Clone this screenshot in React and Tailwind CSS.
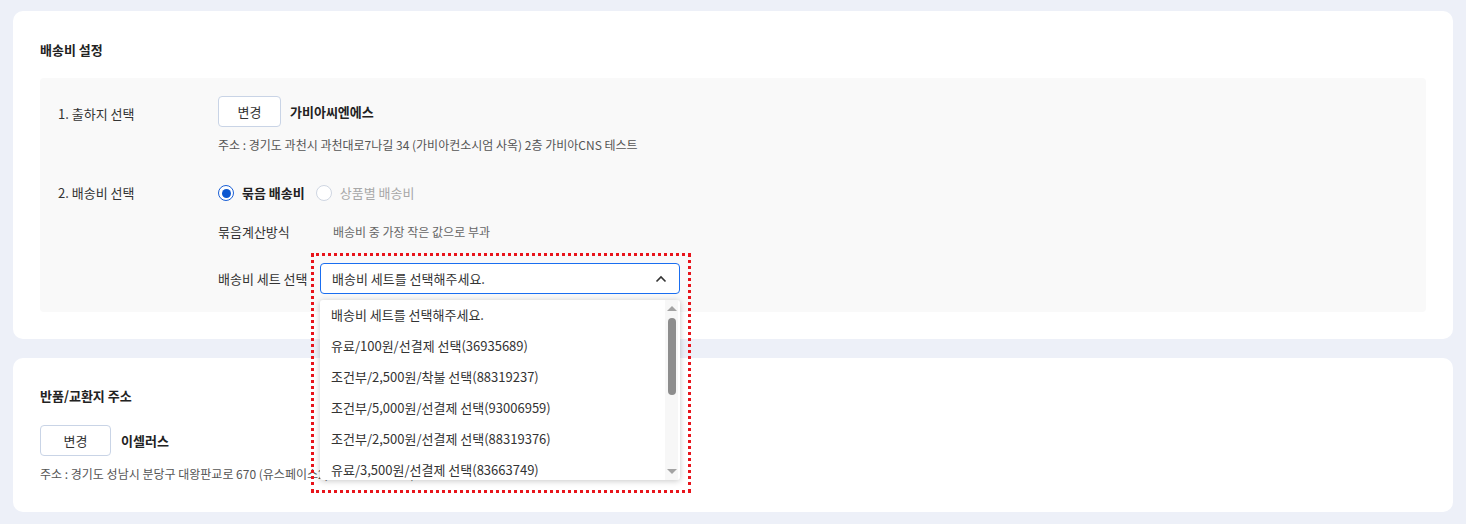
import React from 'react';

const font = { fontFamily: '"Noto Sans CJK KR", "Noto Sans", sans-serif' };

const options = [
  '배송비 세트를 선택해주세요.',
  '유료/100원/선결제 선택(36935689)',
  '조건부/2,500원/착불 선택(88319237)',
  '조건부/5,000원/선결제 선택(93006959)',
  '조건부/2,500원/선결제 선택(88319376)',
  '유료/3,500원/선결제 선택(83663749)',
];

const Radio = ({ checked, label }) => (
  <label className="flex items-center gap-[8px]">
    {checked ? (
      <span className="flex h-[16px] w-[16px] items-center justify-center rounded-full border-[1.5px] border-[#1a5fd6] bg-white">
        <span className="h-[9px] w-[9px] rounded-full bg-[#0b57d0]"></span>
      </span>
    ) : (
      <span className="h-[16px] w-[16px] rounded-full border border-[#cfd6e2] bg-white"></span>
    )}
    <span className={checked ? 'font-semibold text-[#222]' : 'text-[#a8a8a8]'}>{label}</span>
  </label>
);

const ChangeButton = ({ className }) => (
  <button
    type="button"
    className={`h-[31px] rounded-[4px] border border-[#c9d4e6] bg-white text-[13px] text-[#333] ${className}`}
  >
    변경
  </button>
);

export default function App() {
  return (
    <div className="min-h-screen bg-[#edf0f8] px-[13px] pt-[11px] pb-[12px] text-[13px] text-[#333]" style={font}>
      {/* 배송비 설정 */}
      <section className="rounded-[10px] bg-white px-[27px] pt-[29px] pb-[27px]">
        <h2 className="text-[13px] leading-[20px] font-bold text-[#222]">배송비 설정</h2>

        <div className="mt-[18px] rounded-[4px] bg-[#f9f9f9] px-[18px] pt-[18px] pb-[18px]">
          {/* 1. 출하지 선택 */}
          <div className="flex">
            <div className="w-[160px] pt-[9px] leading-[18px]">1. 출하지 선택</div>
            <div>
              <div className="flex items-center gap-[9px]">
                <ChangeButton className="w-[63px]" />
                <span className="font-semibold text-[#222]">가비아씨엔에스</span>
              </div>
              <p className="mt-[9px] text-[12px] leading-[18px] text-[#555]">
                주소 : 경기도 과천시 과천대로7나길 34 (가비아컨소시엄 사옥) 2층 가비아CNS 테스트
              </p>
            </div>
          </div>

          {/* 2. 배송비 선택 */}
          <div className="mt-[30px] flex">
            <div className="w-[160px] leading-[18px]">2. 배송비 선택</div>
            <div>
              <div className="flex items-center gap-[11px] leading-[18px]">
                <Radio checked label="묶음 배송비" />
                <Radio label="상품별 배송비" />
              </div>
              <div className="mt-[21px] flex leading-[18px]">
                <span className="w-[115px]">묶음계산방식</span>
                <span className="text-[12px] text-[#666]">배송비 중 가장 작은 값으로 부과</span>
              </div>
              <div className="mt-[22px] flex items-center">
                <span className="w-[102px]">배송비 세트 선택</span>
                <div className="relative">
                  <div className="flex h-[31px] w-[360px] items-center justify-between rounded-[4px] border border-[#1a6ef0] bg-white pl-[11px] pr-[12px]">
                    <span className="text-[#333]">배송비 세트를 선택해주세요.</span>
                    <svg width="12" height="8" viewBox="0 0 12 8" fill="none">
                      <path d="M1.5 6.5 L6 2 L10.5 6.5" stroke="#333" strokeWidth="1.6" />
                    </svg>
                  </div>

                  {/* dropdown list */}
                  <div className="absolute top-[37px] left-0 z-10 flex h-[180px] w-[360px] overflow-hidden rounded-[3px] bg-white shadow-[0_1px_6px_rgba(0,0,0,0.22)]">
                    <ul className="flex-1 -mt-[1px] pl-[11px]">
                      {options.map((o) => (
                        <li key={o} className="flex h-[31px] items-center text-[#333]">
                          {o}
                        </li>
                      ))}
                    </ul>
                    <div className="mr-[2px] flex w-[13px] flex-col items-center bg-[#f7f7f7] pt-[6px] pb-[6px]">
                      <span className="h-0 w-0 border-x-[5px] border-b-[5px] border-x-transparent border-b-[#a3a3a3]"></span>
                      <span className="mt-[7px] h-[77px] w-[8px] rounded-full bg-[#8d8d8d]"></span>
                      <span className="flex-1"></span>
                      <span className="h-0 w-0 border-x-[5px] border-t-[5px] border-x-transparent border-t-[#a3a3a3]"></span>
                    </div>
                  </div>

                  {/* highlight marker */}
                  <div className="pointer-events-none absolute -top-[10px] -left-[9px] z-20 h-[240px] w-[380px] border-[3px] border-dotted border-[#e8141b]"></div>
                </div>
              </div>
            </div>
          </div>
        </div>
      </section>

      {/* 반품/교환지 주소 */}
      <section className="mt-[19px] rounded-[10px] bg-white px-[27px] pt-[28px] pb-[29px]">
        <h2 className="text-[13px] leading-[20px] font-bold text-[#222]">반품/교환지 주소</h2>
        <div className="mt-[19px] flex items-center gap-[10px]">
          <ChangeButton className="w-[71px]" />
          <span className="font-semibold text-[#222]">이셀러스</span>
        </div>
        <p className="mt-[9px] text-[12px] leading-[18px] text-[#555]">
          주소 : 경기도 성남시 분당구 대왕판교로 670 (유스페이스2, 이셀러스 사무실)
        </p>
      </section>
    </div>
  );
}
